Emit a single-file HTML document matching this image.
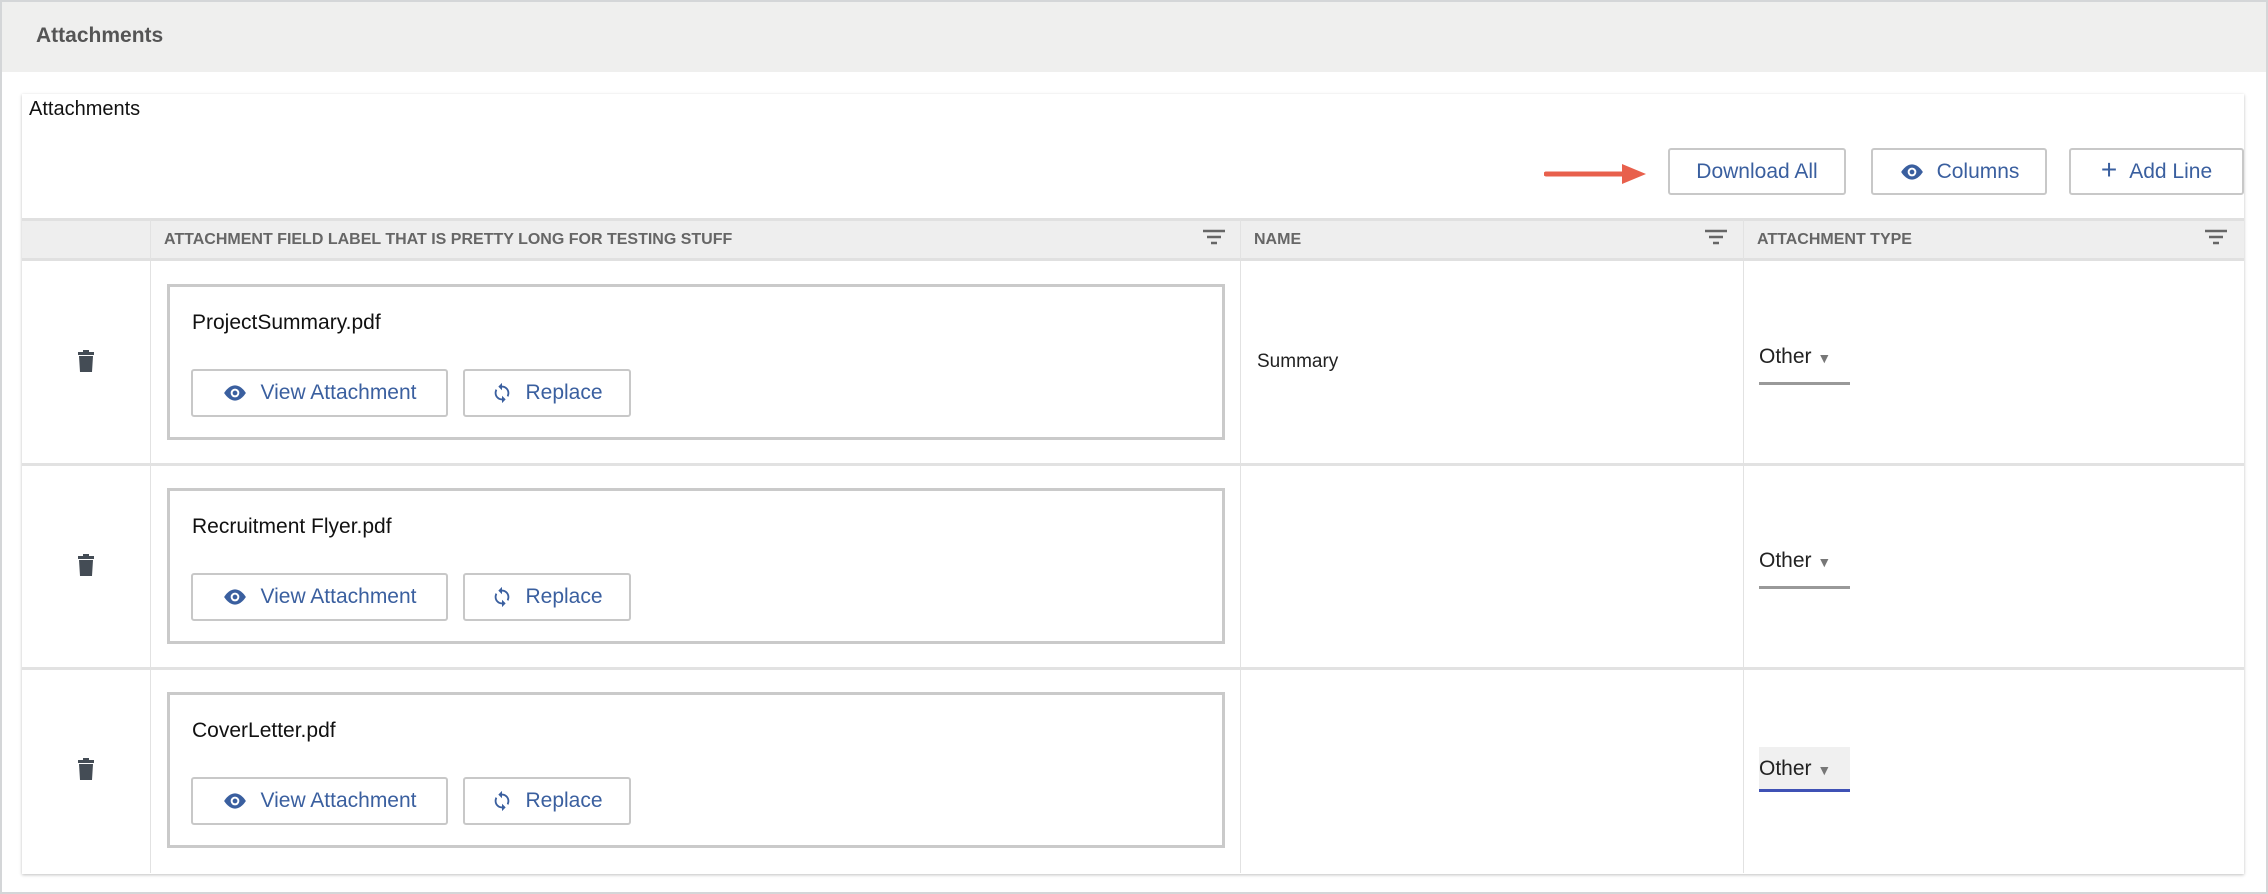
<!DOCTYPE html>
<html><head><meta charset="utf-8"><style>
*{box-sizing:border-box;margin:0;padding:0}
body{width:2268px;height:894px;background:#fff;font-family:"Liberation Sans",Arial,sans-serif;position:relative;overflow:hidden;border:2px solid #d4d6d8}
.abs{position:absolute}
.hdr{left:0;top:0;width:2264px;height:70px;background:#efefee}
.hdr span{position:absolute;left:34px;top:22px;font-size:21px;font-weight:bold;color:#555}
.card{left:20px;top:92px;width:2222px;height:780px;background:#fff;box-shadow:0 1px 3px rgba(0,0,0,.25)}
.btn{position:absolute;border:2px solid #c8c8c8;border-radius:3px;background:#fff;color:#3a5f9f;font-size:21px;display:flex;align-items:center;justify-content:center;gap:12px}
.th{position:absolute;top:124px;height:43px;background:#eee;border-bottom:3px solid #e0e0e0;border-top:3px solid #e0e0e0;font-size:16px;font-weight:bold;color:#666;line-height:37px;padding-left:13px}
.col{position:absolute;top:167px;width:1px;height:612px;background:#e2e2e2}
.rowline{position:absolute;left:0;width:2222px;height:3px;background:#e2e2e2}
.box{position:absolute;left:145px;width:1058px;height:156px;border:3px solid #cacaca;border-top-width:3px}
.fname{position:absolute;left:22px;top:24px;font-size:21px;color:#111}
.sel{position:absolute;left:1737px;width:91px;height:40px;font-size:21px;color:#222;border-bottom:3px solid #999}
</style></head><body>
<div class="abs hdr"><span>Attachments</span></div>
<div class="abs card">
<div class="abs" style="left:7px;top:4px;font-size:20px;color:#111">Attachments</div>
<svg class="abs" style="left:1522px;top:68px" width="104" height="24"><path d="M2 12H80" stroke="#e8604c" stroke-width="5" stroke-linecap="round"/><path d="M78 2L102 12L78 22Z" fill="#e8604c"/></svg>
<div class="btn" style="left:1646px;top:54px;width:178px;height:47px">Download All</div>
<div class="btn" style="left:1849px;top:54px;width:176px;height:47px"><svg width="26" height="18" viewBox="0 0 24 16"><path d="M12 1C6 1 2 8 2 8s4 7 10 7 10-7 10-7-4-7-10-7z" fill="#3a5f9f"/><circle cx="12" cy="8" r="4" fill="#fff"/><circle cx="12" cy="8" r="2.2" fill="#3a5f9f"/></svg>Columns</div>
<div class="btn" style="left:2047px;top:54px;width:175px;height:47px"><span style="font-size:28px;font-weight:300;margin-top:-3px">+</span>Add Line</div>

<div class="th" style="left:0;width:128px"></div>
<div class="th" style="left:128px;width:1090px;border-left:1px solid #e2e2e2">ATTACHMENT FIELD LABEL THAT IS PRETTY LONG FOR TESTING STUFF</div>
<div class="th" style="left:1218px;width:503px;border-left:1px solid #e2e2e2">NAME</div>
<div class="th" style="left:1721px;width:501px;border-left:1px solid #e2e2e2">ATTACHMENT TYPE</div>
<svg class="abs" style="left:1180px;top:135px" width="24" height="18"><path d="M1 2H23M5 8H19M9 14H15" stroke="#666" stroke-width="2.5"/></svg>
<svg class="abs" style="left:1682px;top:135px" width="24" height="18"><path d="M1 2H23M5 8H19M9 14H15" stroke="#666" stroke-width="2.5"/></svg>
<svg class="abs" style="left:2182px;top:135px" width="24" height="18"><path d="M1 2H23M5 8H19M9 14H15" stroke="#666" stroke-width="2.5"/></svg>

<div class="col" style="left:128px"></div>
<div class="col" style="left:1218px"></div>
<div class="col" style="left:1721px"></div>
<div class="rowline" style="top:369px"></div>
<div class="rowline" style="top:573px"></div>

<div class="abs" style="left:0;top:167px;width:2222px;height:204px">
 <svg class="abs" style="left:55px;top:89px" width="18" height="22" viewBox="0 0 18 22"><rect x="6" y="0" width="6" height="3" fill="#444c55"/><rect x="1" y="2" width="16" height="3" fill="#444c55"/><path d="M2 6H16L15 22H3Z" fill="#444c55"/></svg>
 <div class="box" style="top:23px"><div class="fname">ProjectSummary.pdf</div>
 <div class="btn" style="left:21px;top:82px;width:257px;height:48px"><svg width="26" height="18" viewBox="0 0 24 16"><path d="M12 1C6 1 2 8 2 8s4 7 10 7 10-7 10-7-4-7-10-7z" fill="#3a5f9f"/><circle cx="12" cy="8" r="4" fill="#fff"/><circle cx="12" cy="8" r="2.2" fill="#3a5f9f"/></svg>View Attachment</div>
 <div class="btn" style="left:293px;top:82px;width:168px;height:48px"><svg width="22" height="24" viewBox="0 0 24 24"><path d="M12 4V1L8 5l4 4V6c3.3 0 6 2.7 6 6 0 1-.3 2-.7 2.8l1.5 1.5C19.5 15 20 13.6 20 12c0-4.4-3.6-8-8-8zm0 14c-3.3 0-6-2.7-6-6 0-1 .3-2 .7-2.8L5.2 7.7C4.5 9 4 10.4 4 12c0 4.4 3.6 8 8 8v3l4-4-4-4v3z" fill="#3a5f9f"/></svg>Replace</div></div>
 <div class="abs" style="left:1235px;top:90px;font-size:19px;color:#222">Summary</div>
 <div class="sel" style="top:84px">Other <span style="font-size:14px;color:#777">▼</span></div>
</div>
<div class="abs" style="left:0;top:371px;width:2222px;height:204px">
 <svg class="abs" style="left:55px;top:89px" width="18" height="22" viewBox="0 0 18 22"><rect x="6" y="0" width="6" height="3" fill="#444c55"/><rect x="1" y="2" width="16" height="3" fill="#444c55"/><path d="M2 6H16L15 22H3Z" fill="#444c55"/></svg>
 <div class="box" style="top:23px"><div class="fname">Recruitment Flyer.pdf</div>
 <div class="btn" style="left:21px;top:82px;width:257px;height:48px"><svg width="26" height="18" viewBox="0 0 24 16"><path d="M12 1C6 1 2 8 2 8s4 7 10 7 10-7 10-7-4-7-10-7z" fill="#3a5f9f"/><circle cx="12" cy="8" r="4" fill="#fff"/><circle cx="12" cy="8" r="2.2" fill="#3a5f9f"/></svg>View Attachment</div>
 <div class="btn" style="left:293px;top:82px;width:168px;height:48px"><svg width="22" height="24" viewBox="0 0 24 24"><path d="M12 4V1L8 5l4 4V6c3.3 0 6 2.7 6 6 0 1-.3 2-.7 2.8l1.5 1.5C19.5 15 20 13.6 20 12c0-4.4-3.6-8-8-8zm0 14c-3.3 0-6-2.7-6-6 0-1 .3-2 .7-2.8L5.2 7.7C4.5 9 4 10.4 4 12c0 4.4 3.6 8 8 8v3l4-4-4-4v3z" fill="#3a5f9f"/></svg>Replace</div></div>
 <div class="sel" style="top:84px">Other <span style="font-size:14px;color:#777">▼</span></div>
</div>
<div class="abs" style="left:0;top:575px;width:2222px;height:204px">
 <svg class="abs" style="left:55px;top:89px" width="18" height="22" viewBox="0 0 18 22"><rect x="6" y="0" width="6" height="3" fill="#444c55"/><rect x="1" y="2" width="16" height="3" fill="#444c55"/><path d="M2 6H16L15 22H3Z" fill="#444c55"/></svg>
 <div class="box" style="top:23px"><div class="fname">CoverLetter.pdf</div>
 <div class="btn" style="left:21px;top:82px;width:257px;height:48px"><svg width="26" height="18" viewBox="0 0 24 16"><path d="M12 1C6 1 2 8 2 8s4 7 10 7 10-7 10-7-4-7-10-7z" fill="#3a5f9f"/><circle cx="12" cy="8" r="4" fill="#fff"/><circle cx="12" cy="8" r="2.2" fill="#3a5f9f"/></svg>View Attachment</div>
 <div class="btn" style="left:293px;top:82px;width:168px;height:48px"><svg width="22" height="24" viewBox="0 0 24 24"><path d="M12 4V1L8 5l4 4V6c3.3 0 6 2.7 6 6 0 1-.3 2-.7 2.8l1.5 1.5C19.5 15 20 13.6 20 12c0-4.4-3.6-8-8-8zm0 14c-3.3 0-6-2.7-6-6 0-1 .3-2 .7-2.8L5.2 7.7C4.5 9 4 10.4 4 12c0 4.4 3.6 8 8 8v3l4-4-4-4v3z" fill="#3a5f9f"/></svg>Replace</div></div>
 <div class="sel" style="top:78px;height:45px;padding-top:10px;background:#f0f0f0;border-bottom-color:#3f51b5">Other <span style="font-size:14px;color:#777">▼</span></div>
</div>
</div>
</body></html>
